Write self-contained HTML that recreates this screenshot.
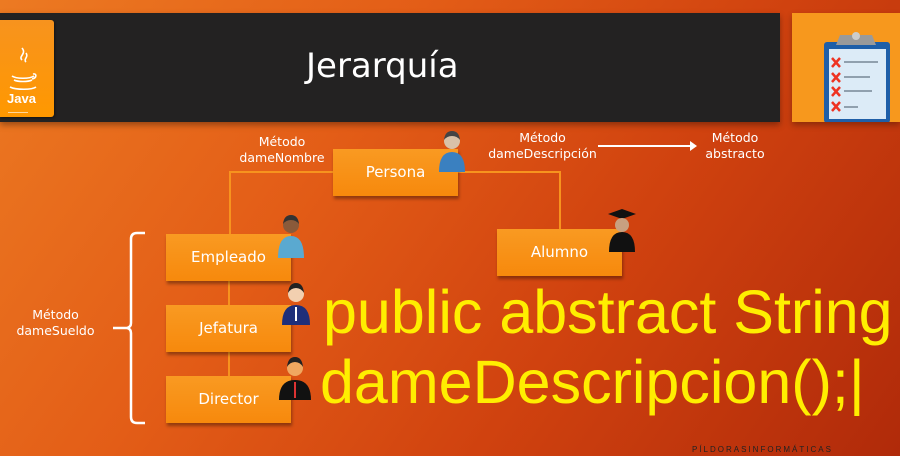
<!DOCTYPE html>
<html><head><meta charset="utf-8"><style>
*{margin:0;padding:0;box-sizing:border-box}
body{width:900px;height:456px;overflow:hidden;position:relative;font-family:"DejaVu Sans","Liberation Sans",sans-serif;
background:linear-gradient(125deg,#ec7a22 0%,#e35d17 35%,#d0420f 65%,#b02a0a 100%);}
.abs{position:absolute}
.bar{left:0;top:13px;width:780px;height:109px;background:#232222;box-shadow:0 3px 6px rgba(0,0,0,.35)}
.java{left:0;top:20px;width:54px;height:97px;background:linear-gradient(#f7931e,#ff9800);border-radius:0 3px 3px 0;box-shadow:1px 1px 2px rgba(0,0,0,.4)}
.title{left:306px;top:46px;color:#fff;font-size:34px}
.clip{left:792px;top:13px;width:108px;height:109px;background:#f7981d;box-shadow:0 3px 6px rgba(0,0,0,.3)}
.box{width:125px;height:47px;background:linear-gradient(#f99a22,#f7890c);color:#fff;font-size:15px;text-align:center;line-height:47px;box-shadow:1px 3px 3px rgba(0,0,0,.35)}
.ln{background:#f7931e}
.lbl{color:#fff;font-size:12.5px;text-align:center;line-height:16px}
.big{color:#ffee00;font-family:"Liberation Sans",Arial,sans-serif;font-size:61px;line-height:64px;white-space:nowrap}
</style></head><body>
<div class="abs bar"></div>
<div class="abs java">
<svg width="54" height="97" viewBox="0 0 54 97"><g fill="none" stroke="#fff" stroke-width="1.6"><path d="M22 40c-4-4 5-6 0-12M26 42c-3-3 3-5 0-9"/><path d="M12 56c4 3 18 3 22 0M14 60c4 2 14 2 18 0M10 67c6 3 22 3 26 0M33 54c4-1 4 4-1 5"/></g><text x="7" y="83" fill="#fff" font-size="13" font-family="Liberation Sans" font-weight="bold">Java</text><rect x="8" y="92" width="20" height="1" fill="#fff" opacity=".6"/></svg></div>
<div class="abs title">Jerarquía</div>
<div class="abs clip"><svg width="108" height="109" viewBox="0 0 108 109">
<rect x="32" y="29" width="66" height="81" rx="3" fill="#1f5fa8"/><rect x="37" y="36" width="57" height="70" fill="#dcebf7"/>
<path d="M48 22h32l4 10H44z" fill="#9a9a9a"/><circle cx="64" cy="23" r="4" fill="#ccc"/>
<g stroke="#e32" stroke-width="2.5"><path d="M40 45l8 9M48 45l-8 9M40 60l8 9M48 60l-8 9M40 74l8 9M48 74l-8 9M40 89l8 9M48 89l-8 9"/></g>
<g stroke="#456" stroke-width="1"><path d="M52 49h34M52 64h26M52 78h28M52 94h14"/></g></svg></div>

<div class="abs ln" style="left:229px;top:171px;width:104px;height:2px"></div>
<div class="abs ln" style="left:229px;top:171px;width:2px;height:63px"></div>
<div class="abs ln" style="left:458px;top:171px;width:103px;height:2px"></div>
<div class="abs ln" style="left:559px;top:171px;width:2px;height:58px"></div>
<div class="abs ln" style="left:228px;top:281px;width:2px;height:95px"></div>

<div class="abs box" style="left:333px;top:149px">Persona</div>
<div class="abs box" style="left:166px;top:234px">Empleado</div>
<div class="abs box" style="left:166px;top:305px">Jefatura</div>
<div class="abs box" style="left:166px;top:376px">Director</div>
<div class="abs box" style="left:497px;top:229px">Alumno</div>

<div class="abs lbl" style="left:232px;top:134px;width:100px">Método<br>dameNombre</div>
<div class="abs lbl" style="left:485px;top:130px;width:115px">Método<br>dameDescripción</div>
<div class="abs lbl" style="left:695px;top:130px;width:80px">Método<br>abstracto</div>
<div class="abs" style="left:598px;top:145px;width:94px;height:2px;background:#fff"></div>
<div class="abs" style="left:690px;top:141px;width:0;height:0;border-left:7px solid #fff;border-top:5px solid transparent;border-bottom:5px solid transparent"></div>
<div class="abs lbl" style="left:8px;top:307px;width:95px">Método<br>dameSueldo</div>
<svg class="abs" style="left:105px;top:230px" width="45" height="200"><path d="M40 3h-8q-6 0-6 6v84q0 4-4 5h-14M22 98q4 1 4 5v84q0 6 6 6h8" fill="none" stroke="#fff" stroke-width="2.5"/></svg>

<svg class="abs" style="left:438px;top:130px" width="28" height="42"><circle cx="14" cy="11" r="8" fill="#d9c2a8"/><path d="M6 10q1-9 8-9t8 9q-3-4-8-4t-8 4z" fill="#444"/><path d="M1 42q0-20 13-20t13 20z" fill="#3a80c0"/></svg>
<svg class="abs" style="left:277px;top:214px" width="28" height="44"><circle cx="14" cy="11" r="8" fill="#8a5a3a"/><path d="M6 10q1-9 8-9t8 9q-3-4-8-4t-8 4z" fill="#333"/><path d="M1 44q0-22 13-22t13 22z" fill="#5aa9d0"/></svg>
<svg class="abs" style="left:280px;top:283px" width="32" height="42"><circle cx="16" cy="11" r="8" fill="#f2d0b0"/><path d="M8 10q1-10 8-10t8 10q-3-5-8-5t-8 5z" fill="#222"/><path d="M2 42q0-20 14-20t14 20z" fill="#1e2f7a"/><path d="M15 24h2v14h-2z" fill="#fff"/></svg>
<svg class="abs" style="left:278px;top:356px" width="34" height="44"><circle cx="17" cy="12" r="8" fill="#f0a860"/><path d="M9 11q1-10 8-10t8 10q-3-5-8-5t-8 5z" fill="#222"/><path d="M1 44q0-20 16-20t16 20z" fill="#111"/><path d="M16 26h2v16h-2z" fill="#d33"/></svg>
<svg class="abs" style="left:606px;top:208px" width="32" height="44"><path d="M2 6l14-5 14 5-14 5z" fill="#111"/><circle cx="16" cy="17" r="7" fill="#c8a080"/><path d="M3 44q0-20 13-20t13 20z" fill="#111"/></svg>

<div class="abs big" style="left:323px;top:280px">public abstract String</div>
<div class="abs big" style="left:320px;top:350px">dameDescripcion();|</div>
<div class="abs" style="left:692px;top:445px;font-size:8px;letter-spacing:2px;color:#222;font-family:'Liberation Sans',sans-serif">PÍLDORASINFORMÁTICAS</div>
</body></html>
